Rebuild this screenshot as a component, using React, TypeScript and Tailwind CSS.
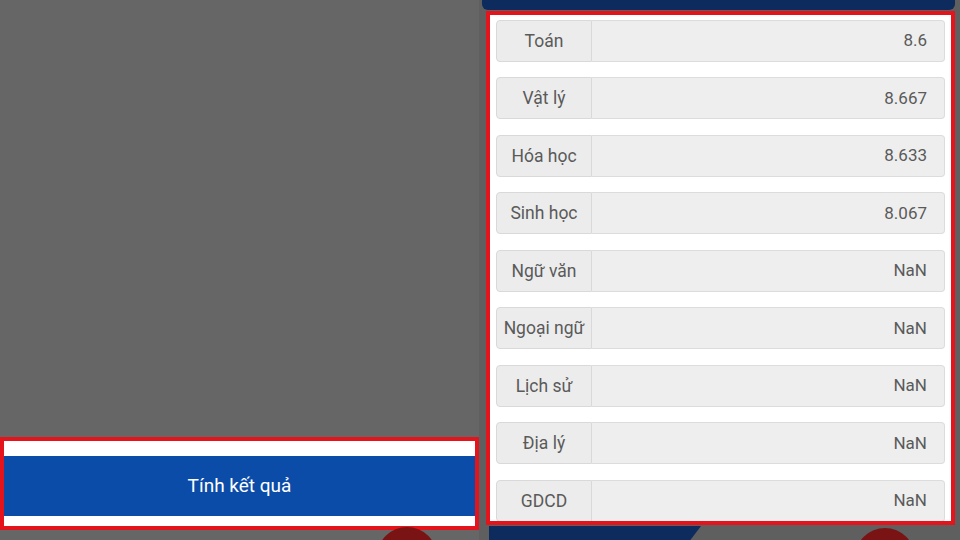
const subjects = [
  { name: 'Toán', score: '8.6' },
  { name: 'Vật lý', score: '8.667' },
  { name: 'Hóa học', score: '8.633' },
  { name: 'Sinh học', score: '8.067' },
  { name: 'Ngữ văn', score: 'NaN' },
  { name: 'Ngoại ngữ', score: 'NaN' },
  { name: 'Lịch sử', score: 'NaN' },
  { name: 'Địa lý', score: 'NaN' },
  { name: 'GDCD', score: 'NaN' },
];

export default function App() {
  return (
    <div
      className="relative flex w-[960px] h-[540px] overflow-hidden bg-[#5f5f5f]"
      style={{ fontFamily: 'Roboto, "Noto Sans", sans-serif' }}
    >
      {/* Left: result button */}
      <div className="w-[479px] h-full bg-[#666666] flex flex-col justify-end pb-[10px]">
        <div className="h-[93px] border-[4px] border-[#e3141b] bg-white flex flex-col pt-[15px] pb-[10px]">
          <button className="flex-1 bg-[#0b4ca9] text-white text-[19px] flex items-center justify-center">
            Tính kết quả
          </button>
        </div>
      </div>

      {/* Right: scores */}
      <div className="flex-1 flex flex-col pl-[3px] pr-[5px]">
        <div className="h-[10px] bg-[#0d2b5c] rounded-b-[6px]" />
        <div className="ml-[4px] mt-[1px] h-[517px] border-[4px] border-[#e3141b] bg-white overflow-hidden">
          <div className="flex flex-col gap-[15.5px] pt-[5px] pl-[6px] pr-[6px]">
            {subjects.map(s => (
              <div key={s.name} className="flex h-[42px] shrink-0">
                <div className="w-[96px] shrink-0 flex items-center justify-center bg-[#ececec] border border-[#d9d9d9] rounded-l-[4px] text-[17.5px] text-[#5a5a5a] whitespace-nowrap">
                  {s.name}
                </div>
                <div className="flex-1 flex items-center justify-end pr-[17px] bg-[#eeeeee] border border-l-0 border-[#dcdcdc] rounded-r-[4px] text-[17px] text-[#5a5a5a]">
                  {s.score}
                </div>
              </div>
            ))}
          </div>
        </div>
        <div className="h-[14px] mt-[1px] ml-[7px] w-[212px] bg-[#0d2b5c] [clip-path:polygon(0_0,100%_0,95%_100%,0_100%)]" />
      </div>

      {/* Floating circular buttons peeking at the bottom */}
      <div className="absolute left-[377px] top-[527px] w-[60px] h-[60px] rounded-full bg-[#7a1414]" />
      <div className="absolute left-[855px] top-[528px] w-[60px] h-[60px] rounded-full bg-[#7a1414]" />
    </div>
  );
}
